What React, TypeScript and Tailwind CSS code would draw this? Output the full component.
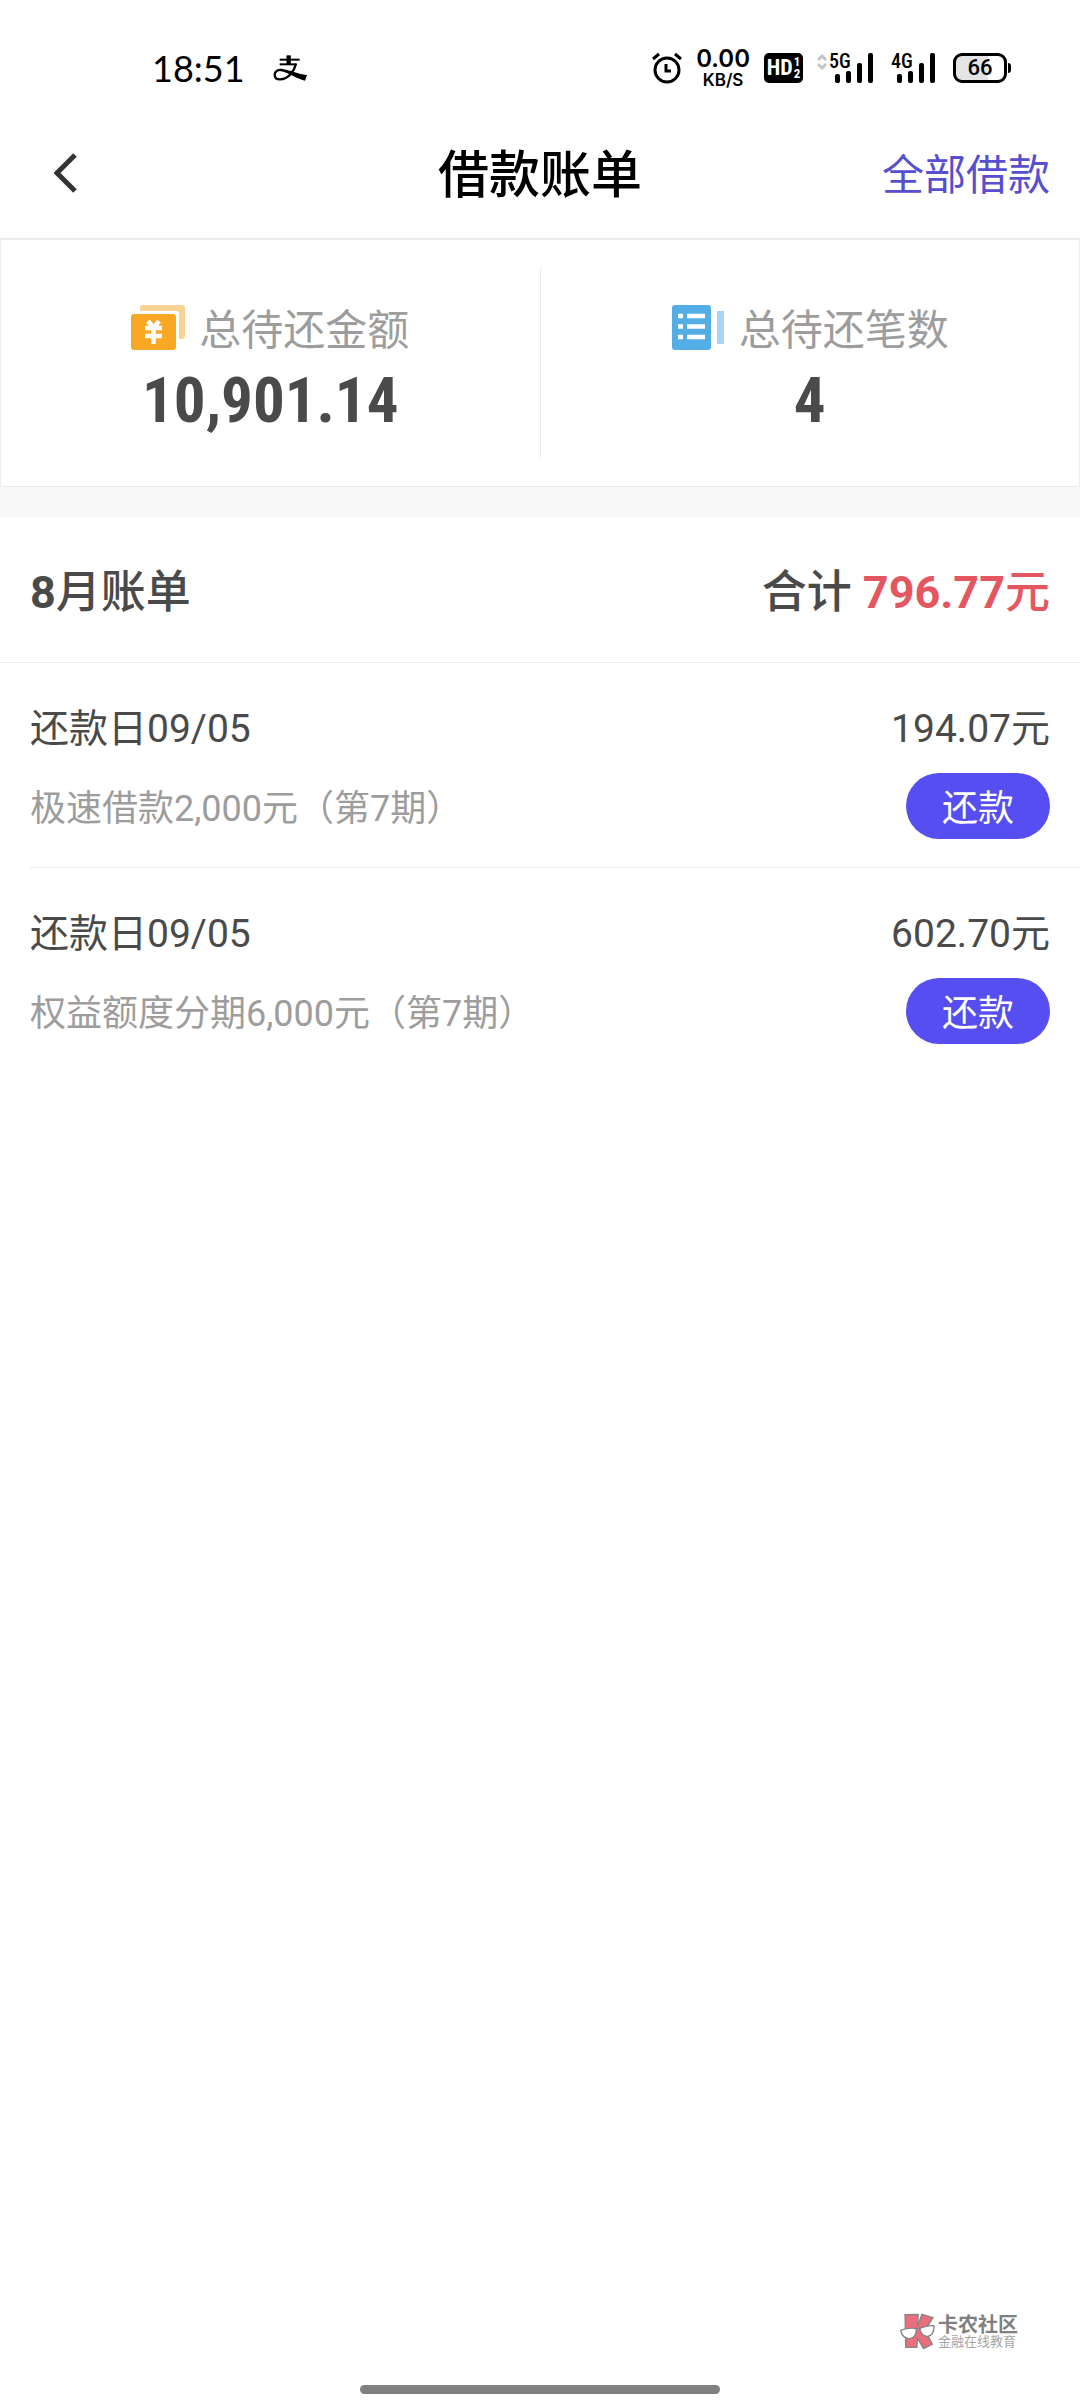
import { clsx } from 'clsx';

interface Bill {
  id: number;
  dueDate: string;
  amount: string;
  description: string;
}

const bills: Bill[] = [
  { id: 1, dueDate: '09/05', amount: '194.07', description: '极速借款2,000元（第7期）' },
  { id: 2, dueDate: '09/05', amount: '602.70', description: '权益额度分期6,000元（第7期）' },
];

function AlipayIcon() {
  return (
    <svg width="34" height="26" viewBox="427 76 102 78" fill="none" stroke="#000">
      <path d="M447 90H507" strokeWidth="6" />
      <path d="M474 77V104" strokeWidth="13" />
      <path d="M447 104H498" strokeWidth="6" />
      <path d="M496 102C491 122 475 149 448 149C437 149 432 143 432 135C432 125 441 120 453 121" strokeWidth="7" />
      <path d="M450 117C474 119 499 133 529 136L523 153C497 148 474 128 450 125Z" fill="#000" stroke="none" />
    </svg>
  );
}

function AlarmIcon() {
  return (
    <svg width="30" height="32" viewBox="0 0 30 32" fill="none" stroke="#000">
      <circle cx="15" cy="18" r="12" strokeWidth="3" />
      <path d="M1 7L7 2M29 7L23 2" strokeWidth="3" />
      <path d="M14 12V19H19" strokeWidth="3" />
    </svg>
  );
}

function Signal({ label, roaming = false }: { label: string; roaming?: boolean }) {
  return (
    <div className="mr-1 flex">
      {roaming && (
        <svg className="mt-px" width="12" height="16" viewBox="0 0 12 16" fill="none" stroke="#c4c4c4" strokeWidth="3">
          <path d="M1 6L5 2L9 6M1 10L5 14L9 10" />
        </svg>
      )}
      <div className="relative">
        <svg width="44" height="30" viewBox="0 0 44 30">
          <rect x="6" y="21" width="5" height="9" rx="2" />
          <rect x="17" y="18" width="5" height="12" rx="2" />
          <rect x="28" y="10" width="5" height="20" rx="2" />
          <rect x="39" y="0" width="5" height="30" rx="2" />
        </svg>
        <span className="absolute top-0 left-0 font-['Roboto_Condensed',Roboto,sans-serif] text-[20px] leading-[16px] font-medium">
          {label}
        </span>
      </div>
    </div>
  );
}

function StatusBar() {
  return (
    <div className="flex h-[108px] items-center justify-between pt-[27px] pr-[69px] pl-[152px] text-black">
      <div className="flex items-center gap-7">
        <span className="font-[Lato,sans-serif] text-[36px] leading-[40px]">18:51</span>
        <AlipayIcon />
      </div>
      <div className="flex items-center gap-[14px]">
        <AlarmIcon />
        <div className="flex flex-col items-center font-[Inter,sans-serif] font-semibold">
          <span className="text-[24px] leading-[24px]">0.00</span>
          <span className="text-[17px] leading-[18px]">KB/S</span>
        </div>
        <div className="flex h-[30px] w-[39px] items-center justify-center gap-px rounded-[5px] bg-black font-['Roboto_Condensed',Roboto,sans-serif] font-bold text-white">
          <span className="text-[22px] leading-[24px]">HD</span>
          <span className="flex flex-col text-[13px] leading-[12px]">
            <span>1</span>
            <span>2</span>
          </span>
        </div>
        <Signal label="5G" roaming />
        <Signal label="4G" />
        <div className="flex items-center gap-px">
          <div className="flex h-[30px] w-[54px] items-center justify-center rounded-[9px] border-3 border-black bg-linear-to-r from-[#e4e4e4] from-66% to-white to-66% text-[22px] leading-[24px] font-medium">
            66
          </div>
          <div className="h-[10px] w-[3px] rounded-r-sm bg-black" />
        </div>
      </div>
    </div>
  );
}

function AmountIcon() {
  return (
    <svg width="54" height="46" viewBox="0 0 54 46">
      <rect x="9" y="0" width="45" height="34" rx="3" fill="#f9d394" />
      <rect x="-3" y="6" width="51" height="42" rx="3" fill="#fff" />
      <rect x="0" y="9" width="45" height="36" rx="3" fill="#f9a826" />
      <path d="M17 16L22.500 23L28 16M14 23H31M14 31H31M22.500 22V39" fill="none" stroke="#fff" strokeWidth="4.500" />
    </svg>
  );
}

function CountIcon() {
  return (
    <svg width="54" height="46" viewBox="0 0 54 46">
      <rect x="1" y="0" width="39" height="45" rx="3" fill="#54aee6" />
      <rect x="46" y="6" width="7" height="33" fill="#a8d6f2" />
      <path d="M7 11H12M16 11H34M7 21.500H12M16 21.500H34M7 32H12M16 32H34" stroke="#fff" strokeWidth="4.500" />
    </svg>
  );
}

function SummaryItem({ icon, label, value }: { icon: React.ReactNode; label: string; value: string }) {
  return (
    <div className="flex flex-1 flex-col items-center pt-[55px]">
      <div className="flex items-center gap-[14px]">
        {icon}
        <span className="pt-[6px] text-[42px] leading-[60px] text-[#9d9d9d]">{label}</span>
      </div>
      <span className="font-['Roboto_Condensed',Roboto,sans-serif] text-[63px] leading-[80px] font-bold text-[#4a4a4a]">
        {value}
      </span>
    </div>
  );
}

function BillRow({ bill, last }: { bill: Bill; last: boolean }) {
  return (
    <li className={clsx('ml-[30px] pt-[36px] pr-[30px] pb-[28px]', !last && 'border-b border-[#ececec]')}>
      <div className="flex justify-between text-[39px] leading-[60px] text-[#4a4a4a]">
        <span>还款日{bill.dueDate}</span>
        <span>{bill.amount}元</span>
      </div>
      <div className="mt-[14px] flex items-center justify-between">
        <span className="pt-[6px] text-[36px] leading-[54px] text-[#9d9d9d]">{bill.description}</span>
        <button className="h-[66px] w-[144px] rounded-full bg-[#564ef0] pt-[6px] text-[36px] leading-[54px] text-white">
          还款
        </button>
      </div>
    </li>
  );
}

function Watermark() {
  return (
    <div className="flex items-center gap-[3px] self-end pr-[62px]">
      <svg width="35" height="37" viewBox="120 96 104 110" stroke="#858585" strokeWidth="4">
        <path d="M135 101L174 100L172 136L185 100L218 110L195 147L216 189L190 202L172 171L170 198L137 198Z" fill="#ea6f7c" />
        <path d="M122 148Q145 138 168 142Q170 168 150 172Q128 174 122 148ZM179 142Q200 132 221 134Q222 160 204 165Q183 168 179 142ZM168 144Q173 139 179 143" fill="#fff" />
      </svg>
      <div className="flex flex-col">
        <span className="text-[20px] leading-[20px] font-bold text-[#808080]">卡农社区</span>
        <span className="text-[13px] leading-[14px] text-[#a5a5a5]">金融在线教育</span>
      </div>
    </div>
  );
}

export default function App() {
  return (
    <div lang="zh-CN" className="flex min-h-screen flex-col bg-white font-[Roboto,'Noto_Sans_CJK_SC',sans-serif]">
      <StatusBar />

      <header className="grid h-[131px] grid-cols-3 items-center border-b border-[#ececec] px-[30px] pt-[6px]">
        <button aria-label="返回" className="w-fit px-6 pb-[6px]">
          <svg width="24" height="40" viewBox="0 0 24 40" fill="none" stroke="#333" strokeWidth="5">
            <path d="M21 2L3 20L21 38" />
          </svg>
        </button>
        <h1 className="text-center text-[51px] leading-[72px] font-medium text-black">借款账单</h1>
        <a href="#loans" className="text-right text-[42px] leading-[60px] text-[#574fcf]">全部借款</a>
      </header>

      <main className="flex-1">
        <section className="flex h-[248px] border border-[#ececec]">
          <SummaryItem icon={<AmountIcon />} label="总待还金额" value="10,901.14" />
          <div className="my-7 w-px bg-[#ececec]" />
          <SummaryItem icon={<CountIcon />} label="总待还笔数" value="4" />
        </section>

        <section className="border-t-30 border-[#f8f8f8]">
          <div className="flex h-[146px] items-center justify-between border-b border-[#ececec] px-[30px] pt-[6px] text-[45px] leading-[64px] text-[#4a4a4a]">
            <h2 className="font-medium">
              <span className="font-bold">8</span>月账单
            </h2>
            <p className="font-medium">
              合计 <span className="text-[#e45761]"><span className="font-bold">796.77</span>元</span>
            </p>
          </div>
          <ul>
            {bills.map((bill, i) => (
              <BillRow key={bill.id} bill={bill} last={i === bills.length - 1} />
            ))}
          </ul>
        </section>
      </main>

      <footer className="flex flex-col">
        <Watermark />
        <div className="mt-[35px] mb-[6px] h-[9px] w-1/3 self-center rounded-full bg-[#808080]" />
      </footer>
    </div>
  );
}
